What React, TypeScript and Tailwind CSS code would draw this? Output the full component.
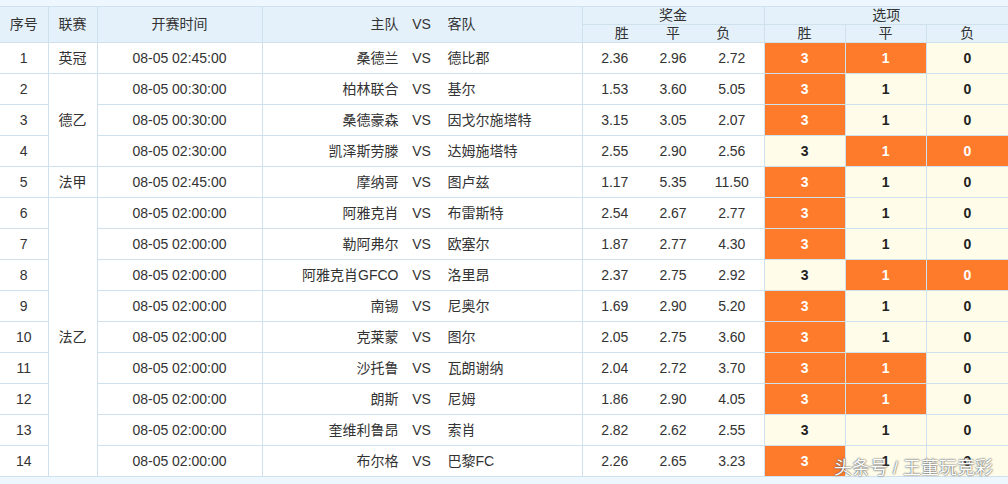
import React from "react";

type Row = {
  no: number;
  time: string;
  home: string;
  away: string;
  odds: [string, string, string];
  hit: [boolean, boolean, boolean];
};

const rows: Row[] = [
  { no: 1, time: "08-05 02:45:00", home: "桑德兰", away: "德比郡", odds: ["2.36", "2.96", "2.72"], hit: [true, true, false] },
  { no: 2, time: "08-05 00:30:00", home: "柏林联合", away: "基尔", odds: ["1.53", "3.60", "5.05"], hit: [true, false, false] },
  { no: 3, time: "08-05 00:30:00", home: "桑德豪森", away: "因戈尔施塔特", odds: ["3.15", "3.05", "2.07"], hit: [true, false, false] },
  { no: 4, time: "08-05 02:30:00", home: "凯泽斯劳滕", away: "达姆施塔特", odds: ["2.55", "2.90", "2.56"], hit: [false, true, true] },
  { no: 5, time: "08-05 02:45:00", home: "摩纳哥", away: "图卢兹", odds: ["1.17", "5.35", "11.50"], hit: [true, false, false] },
  { no: 6, time: "08-05 02:00:00", home: "阿雅克肖", away: "布雷斯特", odds: ["2.54", "2.67", "2.77"], hit: [true, false, false] },
  { no: 7, time: "08-05 02:00:00", home: "勒阿弗尔", away: "欧塞尔", odds: ["1.87", "2.77", "4.30"], hit: [true, false, false] },
  { no: 8, time: "08-05 02:00:00", home: "阿雅克肖GFCO", away: "洛里昂", odds: ["2.37", "2.75", "2.92"], hit: [false, true, true] },
  { no: 9, time: "08-05 02:00:00", home: "南锡", away: "尼奥尔", odds: ["1.69", "2.90", "5.20"], hit: [true, false, false] },
  { no: 10, time: "08-05 02:00:00", home: "克莱蒙", away: "图尔", odds: ["2.05", "2.75", "3.60"], hit: [true, false, false] },
  { no: 11, time: "08-05 02:00:00", home: "沙托鲁", away: "瓦朗谢纳", odds: ["2.04", "2.72", "3.70"], hit: [true, true, false] },
  { no: 12, time: "08-05 02:00:00", home: "朗斯", away: "尼姆", odds: ["1.86", "2.90", "4.05"], hit: [true, true, false] },
  { no: 13, time: "08-05 02:00:00", home: "奎维利鲁昂", away: "索肖", odds: ["2.82", "2.62", "2.55"], hit: [false, false, false] },
  { no: 14, time: "08-05 02:00:00", home: "布尔格", away: "巴黎FC", odds: ["2.26", "2.65", "3.23"], hit: [true, false, false] },
];

// league cells that span rows
const leagues: Record<number, { name: string; span: number }> = {
  1: { name: "英冠", span: 1 },
  2: { name: "德乙", span: 3 },
  5: { name: "法甲", span: 1 },
  6: { name: "法乙", span: 9 },
};

const cell = "border border-[#d0e1ee] text-center align-middle p-0";
const marks = ["3", "1", "0"];

function Teams({ home, away }: { home: string; away: string }) {
  return (
    <div className="grid grid-cols-[136px_46px_1fr] items-center">
      <span className="text-right whitespace-nowrap">{home}</span>
      <span className="text-center">VS</span>
      <span className="text-left pl-[3px] whitespace-nowrap">{away}</span>
    </div>
  );
}

export default function App() {
  return (
    <div
      className="relative w-[1008px] h-[484px] bg-[#eef7fd] pt-[6px] text-[14px] text-[#333] overflow-hidden"
      style={{ fontFamily: '"Liberation Sans", Arial, "Noto Sans CJK SC", sans-serif' }}
    >
      <table className="table-fixed border-collapse w-[1008px] bg-white">
        <colgroup>
          <col className="w-[48px]" />
          <col className="w-[49px]" />
          <col className="w-[165px]" />
          <col className="w-[320px]" />
          <col className="w-[61px]" />
          <col className="w-[60px]" />
          <col className="w-[61px]" />
          <col className="w-[81px]" />
          <col className="w-[81px]" />
          <col className="w-[82px]" />
        </colgroup>
        <thead className="bg-[#e4f1fb] font-normal">
          <tr className="h-[18px]">
            <th rowSpan={2} className={`${cell} border-l-0 font-normal`}>序号</th>
            <th rowSpan={2} className={`${cell} font-normal`}>联赛</th>
            <th rowSpan={2} className={`${cell} font-normal`}>开赛时间</th>
            <th rowSpan={2} className={`${cell} font-normal`}>
              <Teams home="主队" away="客队" />
            </th>
            <th colSpan={3} className={`${cell} font-normal leading-[17px]`}>奖金</th>
            <th colSpan={3} className={`${cell} border-r-0 font-normal leading-[17px]`}>选项</th>
          </tr>
          <tr className="h-[18px]">
            <th className={`${cell} border-r-0 pl-[18px] font-normal leading-[17px]`}>胜</th>
            <th className={`${cell} border-x-0 font-normal leading-[17px]`}>平</th>
            <th className={`${cell} border-l-0 pr-[20px] font-normal leading-[17px]`}>负</th>
            <th className={`${cell} font-normal leading-[17px]`}>胜</th>
            <th className={`${cell} font-normal leading-[17px]`}>平</th>
            <th className={`${cell} border-r-0 font-normal leading-[17px]`}>负</th>
          </tr>
        </thead>
        <tbody>
          {rows.map((r) => (
            <tr key={r.no} className="h-[31px]">
              <td className={`${cell} border-l-0`}>{r.no}</td>
              {leagues[r.no] && (
                <td rowSpan={leagues[r.no].span} className={cell}>
                  {leagues[r.no].name}
                </td>
              )}
              <td className={cell}>{r.time}</td>
              <td className={cell}>
                <Teams home={r.home} away={r.away} />
              </td>
              <td className={`${cell} border-r-0 pl-[4px]`}>{r.odds[0]}</td>
              <td className={`${cell} border-x-0`}>{r.odds[1]}</td>
              <td className={`${cell} border-l-0 pr-[3px]`}>{r.odds[2]}</td>
              {r.hit.map((h, i) => (
                <td
                  key={i}
                  className={`${cell} font-bold ${i === 2 ? "border-r-0" : ""} ${
                    h ? "bg-[#ff7b2c] text-white" : "bg-[#fffde9] text-[#222]"
                  }`}
                >
                  {marks[i]}
                </td>
              ))}
            </tr>
          ))}
        </tbody>
      </table>
      <div
        className="absolute left-[834px] top-[455px] text-[18px] text-white whitespace-nowrap"
        style={{ textShadow: "0 0 2px #555, 0 0 1px #555" }}
      >
        头条号 / 王董玩竞彩
      </div>
    </div>
  );
}
